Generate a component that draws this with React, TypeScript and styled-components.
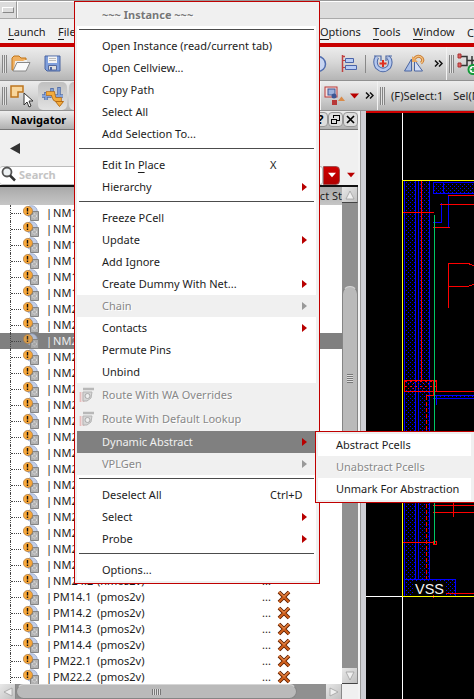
import React from 'react';
import styled, { createGlobalStyle, css } from 'styled-components';

const GlobalStyle = createGlobalStyle`
  * { box-sizing: border-box; }
  body { margin: 0; overflow: hidden; background: #000; }
  #root { font-family: "Noto Sans", "Open Sans", sans-serif; font-size: 11px; color: #1c1c1c; }
`;

const Window = styled.div`
  position: relative;
  width: 474px;
  height: 699px;
  overflow: hidden;
  display: flex;
  flex-direction: column;
  background: #f0f0f0;
  white-space: pre;
`;

const TitleBar = styled.div`
  height: 19px;
  flex: none;
  display: flex;
  background: #dcdcdc;
  border-top: 1px solid #999;
  border-bottom: 1px solid #aaa;
`;

const WindowMenuButton = styled.div`
  width: 17px;
  border-right: 1px solid #999;
  border-top: 1px solid #fff;
  display: flex;
  align-items: center;
  justify-content: center;
  &::after {
    content: '';
    width: 10px;
    height: 4px;
    border: 1px solid #fff;
    border-right-color: #888;
    border-bottom-color: #888;
  }
`;

const TitleFill = styled.div`
  flex: 1;
  border-top: 1px solid #fff;
  border-left: 1px solid #fff;
`;

const MenuBar = styled.div`
  height: 24px;
  flex: none;
  display: flex;
  align-items: center;
  padding-left: 8px;
  padding-top: 2px;
`;

const MenuTitle = styled.span<{ $w: number }>`
  width: ${p => p.$w}px;
  flex: none;
`;

const Mnemonic = styled.span`
  display: inline-block;
  line-height: 14px;
  border-bottom: 1px solid #1c1c1c;
`;

const RedRule = styled.div`
  height: 4px;
  flex: none;
  background: #c80000;
`;

const ToolRow = styled.div<{ $h: number }>`
  height: ${p => p.$h}px;
  flex: none;
  display: flex;
  background: linear-gradient(#ececec, #d8d8d8 45%, #b5b5b5);
  border-bottom: 1px solid #909090;
`;

const ToolGroup = styled.div<{ $w?: number }>`
  ${p => (p.$w ? css`width: ${p.$w}px; flex: none;` : css`flex: 1;`)}
  display: flex;
  align-items: center;
  overflow: hidden;
  & + & { border-left: 1px solid #f2f2f2; }
`;

const Grip = styled.div`
  width: 5px;
  height: 18px;
  flex: none;
  margin-left: 2px;
  background: repeating-linear-gradient(90deg, #858585 0 1px, #e2e2e2 1px 2px);
`;

const Tool = styled.div<{ $w: number; $ml?: number; $pressed?: boolean }>`
  width: ${p => p.$w}px;
  height: 28px;
  flex: none;
  margin-left: ${p => p.$ml ?? 0}px;
  display: flex;
  align-items: center;
  justify-content: center;
  border-radius: 5px;
  ${p => p.$pressed && css`background: linear-gradient(#c0c0c0, #e2e2e2);`}
`;

const Divider = styled.div`
  width: 1px;
  height: 18px;
  flex: none;
  background: #888;
  margin: 0 7px;
`;

const StatusText = styled.span<{ $ml: number }>`
  margin-left: ${p => p.$ml}px;
  flex: none;
`;

const Main = styled.div`
  flex: 1;
  display: flex;
  min-height: 0;
`;

const Navigator = styled.div`
  width: 360px;
  flex: none;
  display: flex;
  flex-direction: column;
  border-right: 2px solid #f4f4f4;
`;

const Splitter = styled.div`
  width: 6px;
  flex: none;
  background: #cdced4;
  border-left: 1px solid #999;
`;

const PanelHeader = styled.div`
  height: 19px;
  flex: none;
  display: flex;
  align-items: center;
  justify-content: space-between;
  padding: 0 0 2px 11px;
  font-weight: bold;
  color: #000;
  background: linear-gradient(#eee, #b0b0b0);
  border-bottom: 1px solid #777;
`;

const PanelButtons = styled.div`
  display: flex;
`;

const PanelButton = styled.div`
  width: 15px;
  height: 15px;
  display: flex;
  align-items: center;
  justify-content: center;
  border-radius: 4px;
  background: #dedede;
  border: 1px solid #969696;
  font-size: 12px;
`;

const BackRow = styled.div`
  height: 35px;
  flex: none;
  padding: 12px 0 0 10px;
`;

const SearchRow = styled.div`
  height: 20px;
  flex: none;
  display: flex;
  align-items: center;
`;

const SearchField = styled.div`
  width: 323px;
  height: 19px;
  display: flex;
  align-items: center;
  padding-bottom: 2px;
  background: #fff;
  border: 1px solid #bbb;
  border-left: 0;
  border-radius: 3px;
  color: #c4c4c4;
  font-weight: bold;
  gap: 3px;
`;

const SearchMode = styled.div`
  width: 17px;
  height: 19px;
  background: linear-gradient(#cf0000, #b00000);
  border: 1px solid #a05050;
  border-radius: 0 4px 4px 0;
  display: flex;
  align-items: center;
  justify-content: center;
`;

const SearchMenu = styled.div`
  margin-left: 7px;
  height: 6px;
  display: flex;
`;

const TreeArea = styled.div`
  flex: 1;
  min-height: 0;
  display: grid;
  grid-template-columns: 342px 16px;
  grid-template-rows: 497px 15px;
  border-top: 2px solid #111;
`;

const TreeColumn = styled.div`
  display: flex;
  flex-direction: column;
  background: #fff;
  overflow: hidden;
`;

const ColumnHeader = styled.div`
  height: 18px;
  flex: none;
  background: linear-gradient(#a9a9a9, #c6c6c6);
  text-align: right;
  line-height: 17px;
`;

const TreeRow = styled.div<{ $selected?: boolean }>`
  height: 16px;
  flex: none;
  display: flex;
  align-items: center;
  line-height: 14px;
  color: ${p => (p.$selected ? '#eee' : '#1c1c1c')};
  background: ${p => (p.$selected ? '#808080' : '#fff')};
`;

const Branch = styled.div`
  width: 13px;
  height: 16px;
  flex: none;
  margin-left: 10px;
  border-left: 1px dotted #444;
  &::before {
    content: '';
    display: block;
    height: 8px;
    width: 10px;
    border-bottom: 1px dotted #444;
  }
`;

const InstanceName = styled.span`
  width: 51px;
  flex: none;
  margin-left: 7px;
  &::before {
    content: '|';
    margin-right: 1px;
  }
`;

const CellName = styled.span`
  width: 165px;
  flex: none;
`;

const Ellipsis = styled.span`
  width: 15px;
  flex: none;
`;

const VTrack = styled.div`
  background: #909090;
  display: flex;
  flex-direction: column;
`;

const HTrack = styled.div`
  background: #909090;
  display: flex;
`;

const ScrollButton = styled.div`
  width: 16px;
  height: 16px;
  flex: none;
  display: flex;
  align-items: center;
  justify-content: center;
  background: linear-gradient(135deg, #e8e8e8, #c0c0c0);
  border-bottom: 1px solid #444;
  border-right: 1px solid #888;
`;

const Thumb = styled.div<{ $w: number; $h: number; $before?: number; $after?: number; $vertical?: boolean }>`
  width: ${p => p.$w}px;
  height: ${p => p.$h}px;
  flex: none;
  margin: ${p => (p.$vertical ? `${p.$before}px 0 ${p.$after}px` : `0 ${p.$after}px 0 0`)};
  display: flex;
  align-items: center;
  justify-content: center;
  background: #bababa;
  border: 1px solid #858585;
  border-top-color: #d6d6d6;
  border-radius: 8px;
  &::after {
    content: '';
    width: ${p => (p.$vertical ? 6 : 9)}px;
    height: ${p => (p.$vertical ? 9 : 6)}px;
    background: repeating-linear-gradient(${p => (p.$vertical ? '180deg' : '90deg')}, #777 0 1px, #ddd 1px 2px);
  }
`;

const Canvas = styled.div`
  width: 108px;
  flex: none;
  background: #000;
  border-top: 2px solid #d00000;
`;

const Popup = styled.div<{ $x: number; $y: number; $w: number }>`
  position: absolute;
  left: ${p => p.$x}px;
  top: ${p => p.$y}px;
  width: ${p => p.$w}px;
  padding: 2px 3px 2px 2px;
  background: #f0f0f0;
  border: 1px solid #c00000;
`;

type ItemKind = 'normal' | 'title' | 'disabled' | 'active';

const Item = styled.div<{ $kind: ItemKind; $h?: number }>`
  height: ${p => p.$h ?? 22}px;
  display: flex;
  align-items: center;
  line-height: 16px;
  ${p => p.$kind === 'normal' && css`background: #fff;`}
  ${p => p.$kind === 'disabled' && css`background: #f0f0f0; color: #888; text-shadow: 1px 1px #fff;`}
  ${p => p.$kind === 'title' && css`color: #777; font-weight: bold; text-shadow: 1px 1px #fff;`}
  ${p => p.$kind === 'active' && css`background: #808080; color: #f0f0f0; margin-right: 1px;`}
`;

const ItemIcon = styled.span<{ $w: number }>`
  width: ${p => p.$w}px;
  padding-left: 2px;
  flex: none;
  display: flex;
`;

const ItemLabel = styled.span`
  flex: 1;
  height: 16px;
`;

const ItemMnemonic = styled.span`
  text-decoration: underline;
  text-underline-offset: 3px;
  text-decoration-thickness: 1px;
`;

const Shortcut = styled.span`
  width: 46px;
  height: 16px;
  flex: none;
`;

const SubmenuArrow = styled.span<{ $off?: boolean; $right: number }>`
  flex: none;
  margin-right: ${p => p.$right}px;
  border: 4px solid transparent;
  border-left: 5px solid ${p => (p.$off ? '#999' : '#b80000')};
  border-right: 0;
`;

const Separator = styled.div`
  height: 9px;
  background: #fff;
  padding: 3px 2px 0;
  &::before {
    content: '';
    display: block;
    height: 1px;
    background: #4c4c4c;
  }
`;

const FolderIcon = () => (
  <svg width="20" height="18" viewBox="0 0 20 18">
    <path d="M1 15V3l2-2h5l2 2h5v4l-11 8z" fill="#f0b060" stroke="#c07418" />
    <path d="M4 6h8l2-1h2v3H7l-4 7z" fill="#eee" />
    <path d="M2 16L6 7.500h13L15 16z" fill="#fafafa" stroke="#888" />
  </svg>
);

const SaveIcon = () => (
  <svg width="17" height="17" viewBox="0 0 17 17">
    <path d="M1 1h15v15H3l-2-2z" fill="#7f9fdc" stroke="#4a64a0" />
    <path d="M4 1.500h9V8H4z" fill="#f4f4f4" />
    <path d="M5 3.500h7M5 5.500h7" stroke="#bbb" />
    <path d="M4.500 10.500h8V15h-8z" fill="#ddd" stroke="#56699a" />
    <path d="M6 12h2v3H6z" fill="#4a64a0" />
  </svg>
);

const CircleIcon = () => (
  <svg width="18" height="18" viewBox="0 0 18 18">
    <circle cx="9" cy="9" r="7.500" fill="#c7d5f2" stroke="#4f6cae" strokeWidth="1.500" />
  </svg>
);

const AlignIcon = () => (
  <svg width="17" height="19" viewBox="0 0 17 19">
    <path d="M1.500 1v17M1 2.500h3" stroke="#c04040" strokeWidth="1.500" />
    <path d="M4.500 4.500h8v4h-8zM4.500 11.500h11v4h-11z" fill="#b8ccf4" stroke="#4a64a8" />
    <path d="M2 6.500h2M2 13.500h2" stroke="#c04040" />
  </svg>
);

const RotateIcon = () => (
  <svg width="20" height="20" viewBox="0 0 20 20">
    <path d="M4 3Q1 8 4 13q6 6 12 0q3-6-1-10" fill="none" stroke="#4d68a5" strokeWidth="4.500" />
    <path d="M4 3Q1 8 4 13q6 6 12 0q3-6-1-10" fill="none" stroke="#b5c8ee" strokeWidth="2.500" />
    <path d="M1 2h7v5M19 2h-6v5" fill="none" stroke="#4d68a5" strokeWidth="1.200" />
    <path d="M10 6v7M6.500 9.500h7" stroke="#e03020" strokeWidth="2" />
  </svg>
);

const FlipIcon = () => (
  <svg width="21" height="19" viewBox="0 0 21 19">
    <path d="M7.500 5v12h-7z" fill="#a9bfe8" stroke="#4a64a0" />
    <path d="M10.500 6l8 11h-8z" fill="#d3def6" stroke="#4a64a0" />
    <path d="M10 5q4-5 8-1q2 3-1 5" fill="none" stroke="#c67528" strokeWidth="3" />
    <path d="M10 5q4-5 8-1q2 3-1 5" fill="none" stroke="#f3c283" strokeWidth="1.300" />
    <path d="M8 2v6h6z" fill="#e9a860" />
  </svg>
);

const MoreIcon = () => (
  <svg width="9" height="7" viewBox="0 0 9 7">
    <path d="M1 .5l3 3-3 3M5 .5l3 3-3 3" fill="none" stroke="#111" strokeWidth="1.500" />
  </svg>
);

const NetIcon = () => (
  <svg width="20" height="22" viewBox="0 0 20 22">
    <path d="M3 3.500h7v9H3M10 7.500h10M15 3v9" fill="none" stroke="#333" strokeWidth="1.500" />
    <path d="M1 1h3v4H1zM1 10h3v4H1z" fill="#dc6464" stroke="#a33" />
    <circle cx="16" cy="16.500" r="4.500" fill="#fff" stroke="#129a38" strokeWidth="2" />
    <path d="M16 14v5M13.500 16.500h5" stroke="#129a38" strokeWidth="1.500" />
  </svg>
);

const SelectIcon = () => (
  <svg width="23" height="24" viewBox="0 0 23 24">
    <path d="M1 2h12v6H8v5H1z" fill="#f8d69c" stroke="#bd751e" strokeWidth="1.500" />
    <path d="M14 9v12l3-3 2 5 2-1-2-5h4z" fill="#fff" stroke="#333" />
  </svg>
);

const RouteIcon = () => (
  <svg width="24" height="22" viewBox="0 0 24 22">
    <path d="M1 11h21M5 7v8M11 3v10M18 2v9" stroke="#5672ab" strokeWidth="3.600" />
    <path d="M1 11h21M5 8v7M11 4v9M18 3v8" stroke="#86a2d7" strokeWidth="1.800" />
    <path d="M5 8.500h7q1 6 3 6h3.500v3" fill="none" stroke="#b76c14" strokeWidth="4.500" />
    <path d="M5.500 8.500h6.500q1 6 3 6h3.500v3" fill="none" stroke="#f3ac3d" strokeWidth="2.800" />
    <path d="M14.500 16.500h8l-4 5z" fill="#f3ac3d" stroke="#b76c14" />
  </svg>
);

const LayerIcon = () => (
  <svg width="22" height="20" viewBox="0 0 22 20">
    <rect x="1" y="1" width="12" height="10" fill="#f5dede" stroke="#b83838" />
    <rect x="4" y="3" width="7" height="6" fill="#9eb3dd" stroke="#3d5693" />
    <circle cx="10" cy="10" r="2.500" fill="#3d5693" />
    <rect x="8" y="14" width="5" height="5" fill="#b83838" />
    <path d="M14 15l3.500-4.500L21 15z" fill="#d98a48" />
  </svg>
);

const DownTriangle = ({ color, w = 9 }: { color: string; w?: number }) => (
  <svg width={w} height="6" viewBox="0 0 9 6">
    <path d="M0 .5h9L4.500 5.500z" fill={color} />
  </svg>
);

const RestoreIcon = () => (
  <svg width="11" height="11" viewBox="0 0 11 11" fill="none" stroke="#000" shapeRendering="crispEdges">
    <path d="M3.500 4V1.500h6v5H7M3 1h7M1.500 5.500h5v4h-5zM1 5h6" />
  </svg>
);

const CloseIcon = () => (
  <svg width="9" height="9" viewBox="0 0 9 9">
    <path d="M1 1l7 7M8 1L1 8" stroke="#000" strokeWidth="1.700" />
  </svg>
);

const BackIcon = () => (
  <svg width="10" height="11" viewBox="0 0 10 11">
    <path d="M10 0v11L0 5.500z" fill="#333" />
  </svg>
);

const MagnifierIcon = () => (
  <svg width="16" height="16" viewBox="0 0 16 16">
    <circle cx="7" cy="6" r="4.500" fill="#eef2f4" stroke="#555" strokeWidth="1.800" />
    <path d="M10 9.500l5 5" stroke="#333" strokeWidth="2.500" />
  </svg>
);

const InstanceIcon = ({ dim }: { dim?: boolean }) => (
  <svg width="16" height="16" viewBox="0 0 16 16" opacity={dim ? 0.75 : 1}>
    <circle cx="8.500" cy="6.500" r="5.800" fill="#c3cfe8" stroke="#8fa0c4" strokeWidth=".8" />
    <path d="M7.500 9.500h2v-3h6v9h-8z" fill="#b2b2b2" stroke="#848484" />
    <circle cx="11.500" cy="11" r="2" fill="none" stroke="#efefef" strokeDasharray="1 1" />
    <circle cx="4.900" cy="6" r="4.600" fill="#f9a83a" stroke="#a9783f" strokeWidth=".7" />
    <path d="M4.500 3v3.500M4.500 7.500v1.500" stroke="#111" strokeWidth="1.400" />
  </svg>
);

const CrossIcon = () => (
  <svg width="14" height="14" viewBox="0 0 14 14">
    <path d="M2 2l10 10M12 2L2 12" stroke="#5c1e00" strokeWidth="3.800" />
    <path d="M2 2l10 10M12 2L2 12" stroke="#d1601c" strokeWidth="2" />
    <path d="M2 1.500L7 6.500l4.500-4.500" fill="none" stroke="#f4ae78" strokeWidth=".7" />
  </svg>
);

const GhostRouteIcon = () => (
  <svg width="16" height="16" viewBox="0 0 16 16">
    <path d="M1.500 5v10M4.500 5v10" stroke="#e8bcbc" strokeWidth="1.800" />
    <path d="M4 2h11" stroke="#b8b8b8" strokeWidth="2.500" />
    <path d="M4 5h9l-1 6-4 3H4z" fill="#d6d6d6" stroke="#b4b4b4" />
    <circle cx="8.500" cy="9" r="2.500" fill="#eee" stroke="#aaa" />
  </svg>
);

const ScrollArrow = ({ d }: { d: string }) => (
  <svg width="10" height="10" viewBox="0 0 10 10">
    <path d={d} fill="#f0f0f0" stroke="#a0a0a0" strokeWidth=".8" />
  </svg>
);

const Layout = () => (
  <svg width="108" height="586" viewBox="366 113 108 586" shapeRendering="crispEdges" fill="none" display="block">
    <defs>
      <pattern id="dots" width="4" height="4" patternUnits="userSpaceOnUse">
        <path d="M0 0h1v1H0zM2 2h1v1H2z" fill="#0000ff" />
      </pattern>
      <pattern id="reddots" width="5" height="5" patternUnits="userSpaceOnUse">
        <path d="M0 1h2v1H0zM3 3h1v1H3z" fill="#ff0000" />
      </pattern>
    </defs>
    <path d="M404 181h12v415h-12zM419 181h11v398h-11zM433 182h41v12h-41zM404 579h52v17h-52zM436 395h38v4h-38z" fill="url(#dots)" />
    <path
      d="M404.500 181v415M415.500 181v398M418.500 181v398M429.500 181v398M433 182.500h41M433.500 182v12M433 193.500h41M443.500 182v12M441.500 203v19.500H433M448.500 195v33M404 579.500h51.500V596M433 395.500h41M433 398.500h41M436.500 395v10"
      stroke="#0000ff"
    />
    <path d="M404 380h33v12h-33z" fill="url(#reddots)" />
    <path
      d="M421.500 181v199M403 212.500h31M448 195.500h26M440 204.500h34M433 227.500h17M448.500 308V263.500h21M469 264.500h3M472 265.500h2M404.500 380.500h32v11h-32zM436 391.500h38M433.500 381v14.500H426M433 505.500h41M433 512.500h41M453.500 503v14M403 542.500h31M433 541.500h3v3h-3zM446 593.500h28M433.500 595v3"
      stroke="#ff0000"
    />
    <path d="M448 286.500h21M469 285.500h3M472 284.500h2" stroke="#ff0000" />
    <path d="M426.500 396v183" stroke="#ff0000" strokeDasharray="4 2" />
    <path d="M434.500 215v329" stroke="#00c864" />
    <path d="M402.500 113v67M402.500 597v102M366 596.500h36" stroke="#fff" />
    <path d="M474 180.500h-71.500v416H474" stroke="#ffff00" />
    <rect x="414" y="582" width="31" height="13" fill="#000" />
    <text x="415" y="594" textLength="29" lengthAdjust="spacingAndGlyphs" fontFamily="Liberation Sans" fontSize="14" fill="#f4f4f4">VSS</text>
  </svg>
);

const names = [
  ...Array(6).fill('NM1'),
  ...Array(17).fill('NM2'),
  'NM24.2',
  'PM14.1', 'PM14.2', 'PM14.3', 'PM14.4', 'PM22.1', 'PM22.2',
];

interface Entry {
  label?: React.ReactNode;
  kind?: ItemKind;
  h?: number;
  icon?: boolean;
  arrow?: boolean;
  shortcut?: string;
}

const instanceMenu: Entry[] = [
  { label: '~~~ Instance ~~~', kind: 'title' },
  {},
  { label: 'Open Instance (read/current tab)' },
  { label: 'Open Cellview...' },
  { label: 'Copy Path' },
  { label: 'Select All' },
  { label: 'Add Selection To...' },
  {},
  { label: <>Edit In <ItemMnemonic>P</ItemMnemonic>lace</>, shortcut: 'X' },
  { label: 'Hierarchy', arrow: true },
  {},
  { label: 'Freeze PCell' },
  { label: 'Update', arrow: true },
  { label: 'Add Ignore' },
  { label: 'Create Dummy With Net...', arrow: true },
  { label: 'Chain', kind: 'disabled', arrow: true },
  { label: 'Contacts', arrow: true },
  { label: 'Permute Pins' },
  { label: 'Unbind' },
  { label: 'Route With WA Overrides', kind: 'disabled', h: 24, icon: true },
  { label: 'Route With Default Lookup', kind: 'disabled', h: 24, icon: true },
  { label: 'Dynamic Abstract', kind: 'active', arrow: true },
  { label: 'VPLGen', kind: 'disabled', arrow: true },
  {},
  { label: 'Deselect All', shortcut: 'Ctrl+D' },
  { label: 'Select', arrow: true },
  { label: 'Probe', arrow: true },
  {},
  { label: 'Options...' },
];

const abstractMenu: Entry[] = [
  { label: 'Abstract Pcells' },
  { label: 'Unabstract Pcells', kind: 'disabled' },
  { label: 'Unmark For Abstraction' },
];

const Menu = ({ entries, x, y, w, indent }: { entries: Entry[]; x: number; y: number; w: number; indent: number }) => (
  <Popup $x={x} $y={y} $w={w}>
    {entries.map((e, i) =>
      e.label ? (
        <Item key={i} $kind={e.kind ?? 'normal'} $h={e.h}>
          <ItemIcon $w={indent}>{e.icon && <GhostRouteIcon />}</ItemIcon>
          <ItemLabel>{e.label}</ItemLabel>
          {e.shortcut && <Shortcut>{e.shortcut}</Shortcut>}
          {e.arrow && <SubmenuArrow $off={e.kind === 'disabled'} $right={e.kind === 'active' ? 8 : 9} />}
        </Item>
      ) : (
        <Separator key={i} />
      ),
    )}
  </Popup>
);

export default function App() {
  return (
    <Window>
      <GlobalStyle />
      <TitleBar>
        <WindowMenuButton />
        <TitleFill />
      </TitleBar>
      <MenuBar>
        <MenuTitle $w={50}><Mnemonic>L</Mnemonic>aunch</MenuTitle>
        <MenuTitle $w={262}><Mnemonic>F</Mnemonic>ile</MenuTitle>
        <MenuTitle $w={53}><Mnemonic>O</Mnemonic>ptions</MenuTitle>
        <MenuTitle $w={40}><Mnemonic>T</Mnemonic>ools</MenuTitle>
        <MenuTitle $w={54}><Mnemonic>W</Mnemonic>indow</MenuTitle>
        <MenuTitle $w={7}>C</MenuTitle>
      </MenuBar>
      <RedRule />
      <ToolRow $h={34}>
        <ToolGroup $w={308}>
          <Grip />
          <Tool $w={20} $ml={4}><FolderIcon /></Tool>
          <Tool $w={17} $ml={13}><SaveIcon /></Tool>
        </ToolGroup>
        <ToolGroup $w={138}>
          <Tool $w={18}><CircleIcon /></Tool>
          <Tool $w={17} $ml={14}><AlignIcon /></Tool>
          <Divider />
          <Tool $w={20}><RotateIcon /></Tool>
          <Tool $w={21} $ml={11}><FlipIcon /></Tool>
          <Tool $w={9} $ml={9}><MoreIcon /></Tool>
        </ToolGroup>
        <ToolGroup>
          <Grip />
          <Tool $w={20} $ml={3}><NetIcon /></Tool>
        </ToolGroup>
      </ToolRow>
      <ToolRow $h={30}>
        <ToolGroup $w={320}>
          <Grip />
          <Tool $w={23} $ml={3}><SelectIcon /></Tool>
          <Tool $w={29} $ml={5} $pressed><RouteIcon /></Tool>
          <Tool $w={29} $ml={2} $pressed />
        </ToolGroup>
        <ToolGroup $w={57}>
          <Tool $w={22} $ml={3}><LayerIcon /></Tool>
          <Tool $w={9} $ml={4}><DownTriangle color="#b80000" /></Tool>
          <Tool $w={9} $ml={6}><MoreIcon /></Tool>
        </ToolGroup>
        <ToolGroup>
          <Grip />
          <StatusText $ml={6}>(F)Select:1</StatusText>
          <StatusText $ml={10}>Sel(N</StatusText>
        </ToolGroup>
      </ToolRow>
      <Main>
        <Navigator>
          <PanelHeader>
            Navigator
            <PanelButtons>
              <PanelButton>?</PanelButton>
              <PanelButton><RestoreIcon /></PanelButton>
              <PanelButton><CloseIcon /></PanelButton>
            </PanelButtons>
          </PanelHeader>
          <BackRow><BackIcon /></BackRow>
          <SearchRow>
            <SearchField><MagnifierIcon />Search</SearchField>
            <SearchMode><DownTriangle color="#fff" w={8} /></SearchMode>
            <SearchMenu><DownTriangle color="#b80000" w={8} /></SearchMenu>
          </SearchRow>
          <TreeArea>
            <TreeColumn>
              <ColumnHeader>Object St</ColumnHeader>
              {names.map((name, i) => (
                <TreeRow key={i} $selected={i === 8}>
                  <Branch />
                  <InstanceIcon dim={i === 8} />
                  <InstanceName>{name}</InstanceName>
                  {i > 22 && (
                    <>
                      <CellName>{name[0] === 'P' ? '(pmos2v)' : '(nmos2v)'}</CellName>
                      <Ellipsis>...</Ellipsis>
                      {i > 23 && <CrossIcon />}
                    </>
                  )}
                </TreeRow>
              ))}
            </TreeColumn>
            <VTrack>
              <ScrollButton><ScrollArrow d="M5 1L9 9H1z" /></ScrollButton>
              <Thumb $vertical $w={16} $h={185} $before={83} $after={197} />
              <ScrollButton><ScrollArrow d="M5 9L9 1H1z" /></ScrollButton>
            </VTrack>
            <HTrack>
              <ScrollButton><ScrollArrow d="M1 5L9 1V9z" /></ScrollButton>
              <Thumb $w={281} $h={15} $after={29} />
              <ScrollButton><ScrollArrow d="M9 5L1 1V9z" /></ScrollButton>
            </HTrack>
          </TreeArea>
        </Navigator>
        <Splitter />
        <Canvas><Layout /></Canvas>
      </Main>
      <Menu entries={instanceMenu} x={74} y={1} w={246} indent={25} />
      <Menu entries={abstractMenu} x={315} y={431} w={160} indent={18} />
    </Window>
  );
}
